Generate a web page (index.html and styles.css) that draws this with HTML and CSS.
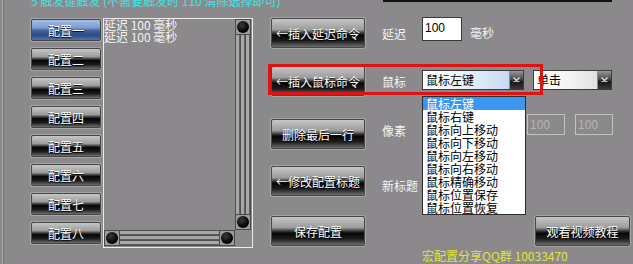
FILE: index.html
```html
<!DOCTYPE html>
<html lang="zh-CN">
<head>
    <meta charset="UTF-8">
    <title>宏配置</title>
    <link rel="stylesheet" href="styles.css">
</head>
<body>

<div class="window">
    <div class="top">
        <div class="tip">5 触发键触发 (不需要触发时 110 清除选择即可)</div>
        <div class="topbox"></div>
    </div>

    <div class="main">
        <!-- config slots -->
        <div class="configs">
            <div class="btn cfg active">配置一</div>
            <div class="btn cfg">配置二</div>
            <div class="btn cfg">配置三</div>
            <div class="btn cfg">配置四</div>
            <div class="btn cfg">配置五</div>
            <div class="btn cfg">配置六</div>
            <div class="btn cfg">配置七</div>
            <div class="btn cfg">配置八</div>
        </div>

        <!-- command list -->
        <div class="listbox">
            <div class="lines">
                <div>延迟 100 毫秒</div>
                <div>延迟 100 毫秒</div>
            </div>
            <div class="vscroll">
                <span class="knob"></span>
                <span class="track"></span>
                <span class="knob"></span>
            </div>
            <div class="hscroll">
                <span class="knob"></span>
                <span class="track"></span>
                <span class="knob"></span>
            </div>
            <div class="corner"></div>
        </div>

        <div class="panel">
            <div class="row r1">
                <div class="btn cmd">←插入延迟命令</div>
                <span class="label">延迟</span>
                <div class="input">100</div>
                <span class="unit">毫秒</span>
            </div>

            <div class="row r2">
                <div class="btn cmd">←插入鼠标命令</div>
                <span class="label">鼠标</span>
                <div class="select s-key">
                    <span class="val">鼠标左键</span>
                    <span class="arrow"><svg width="9" height="9" viewBox="0 0 9 9"><path d="M1.5 2.5 L4.5 5.5 L7.5 2.5" fill="none" stroke="#e0e0e0" stroke-width="1.3"/><path d="M1.5 6.5 H7.5" stroke="#bbb" stroke-width="1"/></svg></span>
                </div>
                <div class="select s-act">
                    <span class="val">单击</span>
                    <span class="arrow"><svg width="9" height="9" viewBox="0 0 9 9"><path d="M1.5 2.5 L4.5 5.5 L7.5 2.5" fill="none" stroke="#e0e0e0" stroke-width="1.3"/><path d="M1.5 6.5 H7.5" stroke="#bbb" stroke-width="1"/></svg></span>
                </div>
                <div class="mark"></div>
                <ul class="droplist">
                    <li class="on">鼠标左键</li>
                    <li>鼠标右键</li>
                    <li>鼠标向上移动</li>
                    <li>鼠标向下移动</li>
                    <li>鼠标向左移动</li>
                    <li>鼠标向右移动</li>
                    <li>鼠标精确移动</li>
                    <li>鼠标位置保存</li>
                    <li>鼠标位置恢复</li>
                </ul>
            </div>

            <div class="row r3">
                <div class="btn cmd">删除最后一行</div>
                <span class="label">像素</span>
                <div class="input off first">100</div>
                <div class="input off">100</div>
            </div>

            <div class="row r4">
                <div class="btn cmd">←修改配置标题</div>
                <span class="label">新标题</span>
            </div>

            <div class="row r5">
                <div class="btn cmd">保存配置</div>
                <div class="btn cmd video">观看视频教程</div>
            </div>

            <div class="qq">宏配置分享QQ群 10033470</div>
        </div>
    </div>
</div>

</body>
</html>
```

FILE: styles.css
```css
body {
    margin: 0;
    width: 633px;
    height: 264px;
    overflow: hidden;
    background: #8b898c;
    font-family: "Noto Sans CJK SC", "Liberation Sans", sans-serif;
    font-size: 12px;
    color: #f4f4f4;
}
.window {
    margin-left: 2px;
    height: 264px;
    border-left: 1px solid #abb1a7;
    box-shadow: inset 1px 0 #727272;
    display: flex;
    flex-direction: column;
}
.top {
    height: 18px;
    display: flex;
}
.tip {
    margin-left: 28px;
    margin-top: -6px;
    line-height: 14px;
    color: #3fe2e6;
    white-space: nowrap;
}
.topbox {
    margin-left: auto;
    margin-right: 21px;
    width: 229px;
    height: 2px;
    background: #111;
}
.main {
    display: flex;
}

/* buttons */
.btn {
    box-sizing: border-box;
    display: flex;
    align-items: center;
    justify-content: center;
    border: 1px solid #474747;
    box-shadow: 0 0 0 1px #a4a4a4;
    border-radius: 2px;
    background: linear-gradient(#c6c6c6 0%, #9c9c9c 38%, #3a3a3a 50%, #060606 58%, #1c1c1c 78%, #6e6e6e 100%);
    color: #fff;
    text-shadow: 0 1px 1px #000;
    white-space: nowrap;
}
.configs {
    margin-left: 28px;
    margin-top: 1px;
    display: flex;
    flex-direction: column;
    gap: 7px;
}
.cfg {
    width: 70px;
    height: 22px;
}
.cfg.active {
    background: linear-gradient(#a6bfe8 0%, #7b99cf 40%, #44649c 52%, #2a4a84 75%, #5472aa 100%);
}
.cmd {
    width: 94px;
    height: 30px;
}

/* list box */
.listbox {
    box-sizing: border-box;
    margin-left: 2px;
    width: 150px;
    height: 230px;
    border: 1px solid #ececec;
    padding: 0 1px 1px 0;
    display: grid;
    grid-template-columns: 1fr 16px;
    grid-template-rows: 1fr 16px;
}
.lines {
    line-height: 12px;
    white-space: nowrap;
}
.vscroll, .hscroll {
    display: flex;
}
.vscroll {
    flex-direction: column;
}
.vscroll .track {
    flex: 1;
    background: repeating-linear-gradient(to right, #4e4e4e 0 1px, #a8a8a8 1px 4px, #5e5e5e 4px 5px);
}
.hscroll .track {
    flex: 1;
    background: repeating-linear-gradient(to bottom, #4e4e4e 0 1px, #a8a8a8 1px 4px, #5e5e5e 4px 5px);
}
.knob {
    box-sizing: border-box;
    width: 16px;
    height: 16px;
    flex: none;
    border: 1px solid #4a4a4a;
    background: #9a9a9a;
    display: flex;
    align-items: center;
    justify-content: center;
}
.knob::after {
    content: "";
    width: 12px;
    height: 12px;
    border-radius: 50%;
    background: radial-gradient(circle at 40% 35%, #3c3c3c, #000 65%);
}

/* right panel */
.panel {
    flex: 1;
    margin-left: 18px;
    display: flex;
    flex-direction: column;
}
.row {
    position: relative;
    display: flex;
    align-items: center;
    height: 30px;
}
.r2 { margin-top: 18px; }
.r3 { margin-top: 23px; }
.r4 { margin-top: 17px; }
.r5 { margin-top: 20px; }
.label {
    margin-left: 17px;
    width: 40px;
    white-space: nowrap;
}
.r3 .label { margin-top: -8px; }
.r4 .label { margin-top: 8px; }
.unit {
    margin-left: 8px;
    margin-top: -2px;
}
.input {
    box-sizing: border-box;
    width: 40px;
    height: 24px;
    align-self: flex-start;
    margin-top: -1px;
    border: 1px solid #3a3a3a;
    background: #fff;
    color: #000;
    font-family: "Liberation Sans", sans-serif;
    padding: 3px 0 0 2px;
}
.input.off {
    width: 38px;
    height: 21px;
    margin-top: -5px;
    margin-left: 10px;
    border: 1px solid #c2c2c2;
    background: transparent;
    color: #b4b4b4;
}
.input.off.first {
    margin-left: 105px;
}
.select {
    box-sizing: border-box;
    display: flex;
    height: 20px;
    margin-top: -3px;
    border: 1px solid #3c3c3c;
    color: #000;
}
.select .val {
    flex: 1;
    padding-left: 3px;
    line-height: 18px;
    white-space: nowrap;
}
.s-key {
    width: 102px;
    background: linear-gradient(to right, #ffffff, #e2eefa 50%, #b8d2ee);
}
.s-act {
    width: 79px;
    margin-left: 9px;
    background: linear-gradient(to right, #ffffff, #f2f2f2 50%, #d6d6d6);
}
.arrow {
    width: 13px;
    border-left: 1px solid #8c8c8c;
    background: linear-gradient(#9a9a9a, #4a4a4a 45%, #161616 60%, #3a3a3a);
    display: flex;
    align-items: center;
    justify-content: center;
}
.mark {
    position: absolute;
    left: -3px;
    top: -2px;
    width: 275px;
    height: 31px;
    box-sizing: border-box;
    border: 3px solid #dc1414;
}
.droplist {
    position: absolute;
    left: 151px;
    top: 30px;
    width: 104px;
    margin: 0;
    padding: 0;
    list-style: none;
    box-sizing: border-box;
    border: 1px solid #2c2c2c;
    background: #fff;
    color: #000;
    z-index: 2;
}
.droplist li {
    height: 13px;
    line-height: 13px;
    padding-left: 3px;
    white-space: nowrap;
}
.droplist li.on {
    background: #3c96f0;
    color: #fff;
}
.video {
    width: 95px;
    margin-left: auto;
    margin-right: 3px;
}
.qq {
    margin-top: 4px;
    margin-left: 151px;
    line-height: 12px;
    color: #e2e43a;
    white-space: nowrap;
}
```
